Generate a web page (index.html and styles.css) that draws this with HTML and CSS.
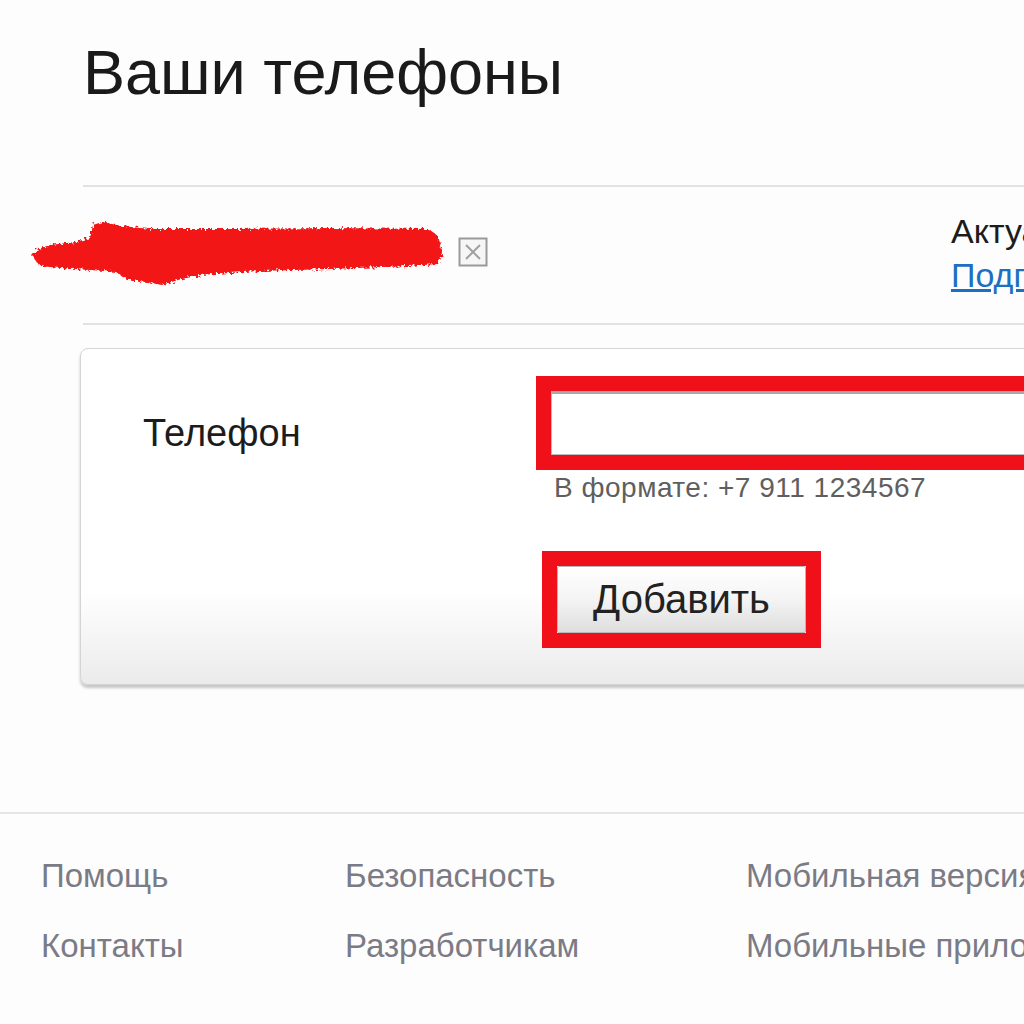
FILE: index.html
```html
<!DOCTYPE html>
<html lang="ru">
<head>
  <meta charset="UTF-8">
  <title>Ваши телефоны</title>
  <link rel="stylesheet" href="styles.css">
</head>
<body>
  <div class="page">
    <div class="main">
      <h1>Ваши телефоны</h1>

      <div class="phone-row">
        <div class="phone-left">
          <svg class="scribble" width="420" height="72" viewBox="0 0 420 72">
            <defs>
              <filter id="rough" x="-5%" y="-20%" width="110%" height="140%">
                <feTurbulence type="fractalNoise" baseFrequency="0.35" numOctaves="2" seed="3" result="noise"/>
                <feDisplacementMap in="SourceGraphic" in2="noise" scale="7"/>
              </filter>
            </defs>
            <path filter="url(#rough)" d="M2,37 L8,30 L20,26 L45,23 L60,19 L63,6 L72,3 L92,7 L120,10 L200,10 L300,9 L398,10 L408,17 L413,35 L408,45 L380,47 L300,50 L230,52 L170,56 L148,61 L132,66 L116,63 L96,60 L86,53 L60,51 L30,49 L10,47 Z" fill="#f21616"/>
          </svg>
          <span class="remove-icon">
            <svg width="30" height="30" viewBox="0 0 30 30">
              <rect x="1.5" y="1.5" width="27" height="27" fill="#f6f6f6" stroke="#9a9a9a" stroke-width="2"/>
              <path d="M8 8 L22 22 M22 8 L8 22" stroke="#a0a0a0" stroke-width="2"/>
            </svg>
          </span>
        </div>
        <div class="phone-status">
          <div>Актуальный</div>
          <a href="#">Подписаться</a>
        </div>
      </div>

      <div class="form-box">
        <div class="form-label">Телефон</div>
        <div class="form-field">
          <div class="mark">
            <input class="phone-input" type="text">
          </div>
          <div class="hint">В формате: +7 911 1234567</div>
          <div class="mark mark-btn">
            <button class="add-btn">Добавить</button>
          </div>
        </div>
      </div>
    </div>

    <div class="footer">
      <a href="#">Помощь</a>
      <a href="#">Безопасность</a>
      <a href="#">Мобильная версия</a>
      <a href="#">Контакты</a>
      <a href="#">Разработчикам</a>
      <a href="#">Мобильные приложения</a>
    </div>
  </div>
</body>
</html>
```

FILE: styles.css
```css
body {
  margin: 0;
  overflow: hidden;
  background: #fdfdfd;
  font-family: 'Liberation Sans', Arial, sans-serif;
  color: #1c1c1c;
}
.page {
  width: 1300px;
}
.main {
  padding-left: 83px;
}
h1 {
  margin: 0;
  padding-top: 40px;
  font-size: 63px;
  line-height: 64px;
  font-weight: normal;
  color: #1a1a1a;
}
.phone-row {
  margin-top: 81px;
  border-top: 2px solid #e2e2e2;
  border-bottom: 2px solid #e2e2e2;
  height: 136px;
  display: grid;
  grid-template-columns: 868px auto;
  align-items: center;
}
.phone-left {
  display: flex;
  align-items: center;
  margin-left: -53px;
}
.scribble {
  display: block;
}
.remove-icon {
  display: block;
  margin-left: 8px;
  margin-top: -6px;
}
.remove-icon svg {
  display: block;
}
.phone-status {
  font-size: 34px;
  line-height: 44px;
  margin-top: -4px;
  white-space: nowrap;
}
.phone-status a {
  color: #1d6fc2;
}
.form-box {
  margin-top: 23px;
  margin-left: -3px;
  width: 1150px;
  box-sizing: border-box;
  padding: 27px 0 36px 62px;
  display: grid;
  grid-template-columns: 393px auto;
  border: 1px solid #d4d4d4;
  border-radius: 8px;
  background: linear-gradient(#ffffff 0%, #ffffff 72%, #ebebeb 100%);
  box-shadow: 0 3px 3px rgba(0,0,0,0.22);
}
.form-label {
  margin-top: 35px;
  font-size: 38px;
  line-height: 44px;
}
.mark {
  border: 15px solid #f0101a;
}
.phone-input {
  display: block;
  width: 100%;
  height: 64px;
  box-sizing: border-box;
  border: 1px solid #bdbdbd;
  border-top: 3px solid #a9a9a9;
  background: #fff;
  margin: 0;
}
.hint {
  margin: 3px 0 0 18px;
  font-size: 28px;
  line-height: 30px;
  letter-spacing: 0.5px;
  color: #5f5f5f;
}
.mark-btn {
  display: inline-block;
  margin: 48px 0 0 6px;
  align-self: start;
}
.add-btn {
  display: block;
  width: 249px;
  height: 67px;
  border: 1px solid #b8b8b8;
  border-radius: 2px;
  background: linear-gradient(#ffffff 0%, #f4f4f4 50%, #dedede 100%);
  font-family: 'Liberation Sans', Arial, sans-serif;
  font-size: 40px;
  color: #222;
  padding: 0;
}
.footer {
  margin-top: 127px;
  border-top: 2px solid #e6e6e6;
  padding: 27px 0 0 41px;
  display: grid;
  grid-template-columns: 304px 401px auto;
  font-size: 33px;
  line-height: 70px;
}
.footer a {
  color: #7b7b86;
  text-decoration: none;
  white-space: nowrap;
}
```
